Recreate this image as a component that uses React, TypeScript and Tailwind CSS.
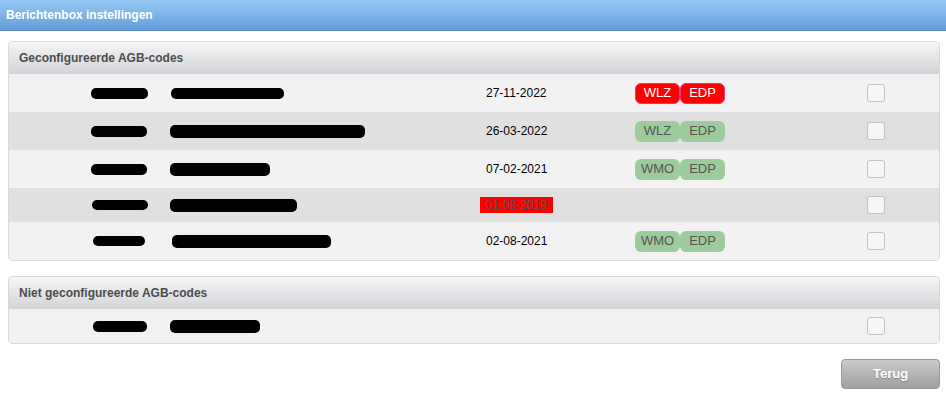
import React from "react";

type Row = {
  b1: [number, number, number];
  b2: [number, number, number];
  date: string;
  expired?: boolean;
  badges: string[];
  red?: boolean;
  h: number;
};

const rows: Row[] = [
  { b1: [0, 57, 11], b2: [1, 113, 11], date: "27-11-2022", badges: ["WLZ", "EDP"], red: true, h: 38 },
  { b1: [0, 56, 11], b2: [0, 195, 13], date: "26-03-2022", badges: ["WLZ", "EDP"], h: 38 },
  { b1: [0, 56, 11], b2: [0, 100, 13], date: "07-02-2021", badges: ["WMO", "EDP"], h: 38 },
  { b1: [1, 56, 10], b2: [0, 127, 13], date: "01-08-2019", expired: true, badges: [], h: 34 },
  { b1: [2, 52, 10], b2: [2, 159, 13], date: "02-08-2021", badges: ["WMO", "EDP"], h: 38 },
];

function Blob({ spec }: { spec: [number, number, number] }) {
  return (
    <div
      className="rounded-[5px] bg-black"
      style={{ marginLeft: spec[0], width: spec[1], height: spec[2] }}
    />
  );
}

function Checkbox() {
  return (
    <div className="h-[18px] w-[18px] rounded-[3px] border border-[#c2c2c2] bg-[#f6f6f6]" />
  );
}

function Badge({ label, red }: { label: string; red?: boolean }) {
  return red ? (
    <span className="flex h-[21px] w-[45px] items-center justify-center rounded-[6px] border border-[#e8308a] bg-[#ff0000] text-[13px] text-white">
      {label}
    </span>
  ) : (
    <span className="flex h-[21px] w-[45px] items-center justify-center rounded-[6px] bg-[#9ccc9b] text-[13px] text-[#555]">
      {label}
    </span>
  );
}

function PanelHeader({ title }: { title: string }) {
  return (
    <div className="flex h-[32px] items-center rounded-t-[4px] bg-gradient-to-b from-[#f6f6f6] to-[#d3d4d8] pl-[10px] text-[12px] font-bold text-[#4d4d4d]">
      {title}
    </div>
  );
}

export default function App() {
  return (
    <div
      className="h-[413px] w-[946px] bg-white text-[12px]"
      style={{ fontFamily: '"Liberation Sans", Arial, sans-serif' }}
    >
      <div className="flex h-[31px] items-center border-b border-[#5b8fcb] bg-gradient-to-b from-[#96c8f6] to-[#679ed9] pl-[6px] text-[12px] font-bold text-white">
        Berichtenbox instellingen
      </div>

      <div className="pl-[8px] pr-[6px] pt-[10px]">
        <div className="w-[932px] overflow-hidden rounded-[4px] border border-[#d9d9d9]">
          <PanelHeader title="Geconfigureerde AGB-codes" />
          {rows.map((r, i) => (
            <div
              key={i}
              className={`flex items-center ${i % 2 === 0 ? "bg-[#f2f2f2]" : "bg-[#e0e0e0]"}`}
              style={{ height: r.h }}
            >
              <div className="w-[82px]" />
              <div className="w-[79px]">
                <Blob spec={r.b1} />
              </div>
              <div className="w-[310px]">
                <Blob spec={r.b2} />
              </div>
              <div className="w-[155px]">
                {r.expired ? (
                  <span className="inline-block bg-[#ff0000] px-[6px] leading-[16px] text-[#555]">{r.date}</span>
                ) : (
                  <span className="inline-block px-[6px] text-black">{r.date}</span>
                )}
              </div>
              <div className="flex w-[232px]">
                {r.badges.map((b) => (
                  <Badge key={b} label={b} red={r.red} />
                ))}
              </div>
              <Checkbox />
            </div>
          ))}
        </div>

        <div className="mt-[15px] w-[932px] overflow-hidden rounded-[4px] border border-[#d9d9d9]">
          <PanelHeader title="Niet geconfigureerde AGB-codes" />
          <div className="flex h-[34px] items-center bg-[#f2f2f2]">
            <div className="w-[82px]" />
            <div className="w-[79px]">
              <Blob spec={[2, 54, 11]} />
            </div>
            <div className="w-[697px]">
              <Blob spec={[0, 90, 13]} />
            </div>
            <Checkbox />
          </div>
        </div>

        <div className="mt-[15px] flex justify-end">
          <button className="h-[30px] w-[99px] rounded-[4px] border border-[#999] bg-gradient-to-b from-[#cbcbcb] to-[#9f9f9f] text-[13px] font-bold text-white [text-shadow:0_1px_1px_rgba(0,0,0,0.25)]">
            Terug
          </button>
        </div>
      </div>
    </div>
  );
}
